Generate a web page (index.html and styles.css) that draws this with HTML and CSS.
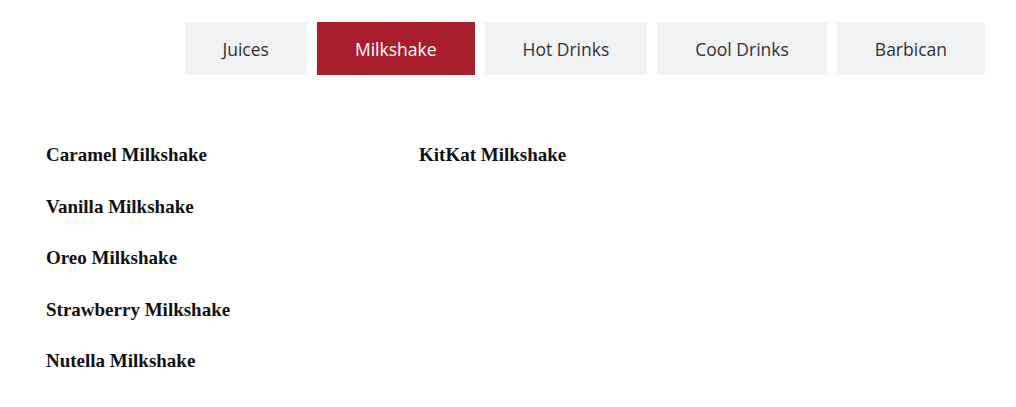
FILE: index.html
```html
<!DOCTYPE html>
<html lang="en">
<head>
    <meta charset="UTF-8">
    <title>Menu - Milkshake</title>
    <link rel="stylesheet" href="styles.css">
</head>
<body>
    <div class="menu">
        <div class="tabs">
            <a class="tab" href="#">Juices</a>
            <a class="tab active" href="#">Milkshake</a>
            <a class="tab" href="#">Hot Drinks</a>
            <a class="tab" href="#">Cool Drinks</a>
            <a class="tab" href="#">Barbican</a>
        </div>

        <div class="items">
            <div class="col">
                <h3 class="item">Caramel Milkshake</h3>
                <h3 class="item">Vanilla Milkshake</h3>
                <h3 class="item">Oreo Milkshake</h3>
                <h3 class="item">Strawberry Milkshake</h3>
                <h3 class="item">Nutella Milkshake</h3>
            </div>
            <div class="col">
                <h3 class="item">KitKat Milkshake</h3>
            </div>
        </div>
    </div>
</body>
</html>
```

FILE: styles.css
```css
:root {
    --accent: #a91e2c;
    --tab-bg: #f1f2f3;
    --tab-text: #333333;
    --item-text: #111111;
}

* {
    box-sizing: border-box;
    margin: 0;
    padding: 0;
}

body {
    background: #ffffff;
    font-family: "Open Sans", "Liberation Sans", sans-serif;
}

.menu {
    padding: 22px 31px 0 46px;
}

.tabs {
    display: flex;
    justify-content: flex-end;
    gap: 10px;
}

.tab {
    display: flex;
    align-items: center;
    justify-content: center;
    height: 53px;
    padding: 0 38px;
    background: var(--tab-bg);
    color: var(--tab-text);
    font-size: 17.5px;
    text-decoration: none;
}

.tab.active {
    background: var(--accent);
    color: #ffffff;
}

.items {
    display: grid;
    grid-template-columns: 373px 373px;
    margin-top: 68px;
}

.col {
    display: flex;
    flex-direction: column;
    gap: 27.5px;
}

.item {
    font-family: "Liberation Serif", "Times New Roman", serif;
    font-weight: bold;
    font-size: 19px;
    line-height: 24px;
    color: var(--item-text);
}
```
